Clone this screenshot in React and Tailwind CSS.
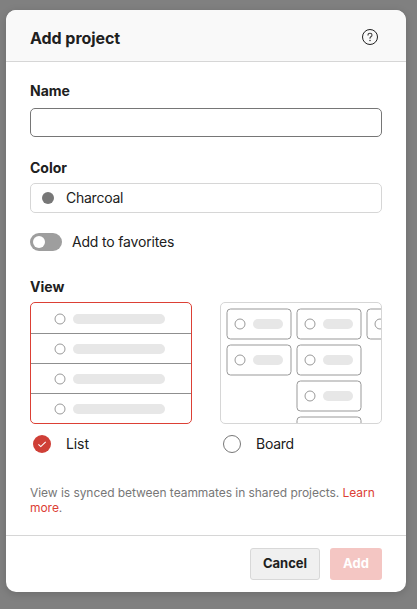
const LIST_ROWS = [
  "h-[31px] border-b pt-[2px]",
  "h-[30px] border-b pt-px",
  "h-[30px] border-b pt-px",
  "h-[29px] pt-px",
];

function ListPreview() {
  return (
    <div className="h-[122px] w-[162px] overflow-hidden rounded-[5px] border border-[#dc4035] bg-white">
      {LIST_ROWS.map((row, i) => (
        <div key={i} className={"flex items-center border-[#8f8f8f] pl-[23px] " + row}>
          <svg width="12" height="12" viewBox="0 0 12 12" className="shrink-0">
            <circle cx="6" cy="6" r="5" fill="none" stroke="#999" />
          </svg>
          <span className="ml-[7px] h-[10px] w-[92px] rounded-full bg-[#e7e7e7]" />
        </div>
      ))}
    </div>
  );
}

function MiniCard({ x, y }) {
  return (
    <g transform={`translate(${x} ${y})`} fill="none">
      <rect x="1" y="1" width="64" height="30" rx="3.5" stroke="#999" />
      <circle cx="14" cy="16" r="5" stroke="#999" />
      <rect x="27" y="11" width="30" height="10" rx="5" fill="#e7e7e7" />
    </g>
  );
}

function BoardPreview() {
  return (
    <div className="h-[122px] w-[162px] overflow-hidden rounded-[5px] border border-[#d6d6d6] bg-white">
      <svg width="160" height="120" viewBox="0 0 160 120" className="block">
        <MiniCard x={5} y={5} />
        <MiniCard x={75} y={5} />
        <MiniCard x={145} y={5} />
        <MiniCard x={5} y={41} />
        <MiniCard x={75} y={41} />
        <MiniCard x={75} y={77} />
        <MiniCard x={75} y={113} />
      </svg>
    </div>
  );
}

export default function App() {
  return (
    <div className="h-[609px] w-[417px] overflow-hidden bg-[#808080] pl-1.5 pt-2.5 font-['Inter',sans-serif] text-sm text-[#202020]">
      <div className="flex h-[582px] w-[400px] flex-col overflow-hidden rounded-[10px] bg-white shadow-[0_2px_8px_rgba(0,0,0,0.16)]">
        <header className="flex h-[52px] shrink-0 items-center justify-between border-b border-[#d6d6d6] bg-[#f9f9f9] pl-6 pr-7 pt-[3px]">
          <h1 className="pt-0.5 text-base font-bold tracking-[-0.05px]">Add project</h1>
          <svg width="16" height="16" viewBox="0 0 16 16" fill="none">
            <circle cx="8" cy="8" r="7.5" stroke="#202020" />
            <path d="M6 6.1C6 4.9 6.8 4.2 8 4.2s2 .7 2 1.8c0 .9-.5 1.3-1.1 1.7-.6.4-.9.7-.9 1.5" stroke="#404040" strokeWidth="1.1" strokeLinecap="round" />
            <circle cx="8" cy="11.5" r=".75" fill="#303030" />
          </svg>
        </header>

        <main className="flex flex-1 flex-col px-6 pt-5">
          <label className="text-sm leading-[18px] font-bold" htmlFor="name">Name</label>
          <input id="name" className="mt-2 h-[29px] w-full rounded-[5px] border border-[#767676] bg-white px-2 outline-none" />

          <div className="mt-[22px] leading-[18px] font-bold">Color</div>
          <button className="mt-1.5 flex h-[30px] w-full items-center rounded-[5px] border border-[#d6d6d6] pl-[11px]">
            <span className="size-3 rounded-full bg-[#777]" />
            <span className="ml-3 tracking-[-0.25px]">Charcoal</span>
          </button>

          <div className="mt-5 flex h-[18px] items-center">
            <span className="flex h-[18px] w-8 items-center rounded-full bg-[#9e9e9e] pl-[3px]">
              <span className="size-3 rounded-full bg-white" />
            </span>
            <span className="ml-2.5 tracking-[-0.18px]">Add to favorites</span>
          </div>

          <div className="mt-[27px] leading-[18px] font-bold">View</div>
          <div className="mt-1.5 flex gap-7">
            <div>
              <ListPreview />
              <div className="mt-[11px] flex h-[18px] items-center pl-[3px]">
                <svg width="18" height="18" viewBox="0 0 18 18" fill="none">
                  <circle cx="9" cy="9" r="9" fill="#cf3f37" />
                  <path d="M5.4 9.3 7.8 11.6 12.7 6.9" stroke="#fff" strokeWidth="1.1" />
                </svg>
                <span className="ml-[15px] tracking-[-0.1px]">List</span>
              </div>
            </div>
            <div>
              <BoardPreview />
              <div className="mt-[11px] flex h-[18px] items-center pl-[3px]">
                <span className="size-[18px] rounded-full border border-[#777]" />
                <span className="ml-[15px] tracking-[-0.25px]">Board</span>
              </div>
            </div>
          </div>

          <p className="mt-8 text-xs leading-[15px] tracking-[-0.05px] text-[#777]">
            View is synced between teammates in shared projects. <a className="text-[#dc4035]">Learn<br />more</a>.
          </p>
        </main>

        <footer className="flex h-[57px] shrink-0 justify-end gap-2.5 border-t border-[#d6d6d6] pr-6 pt-3 text-[13px] font-bold">
          <button className="h-8 w-[70px] rounded-[3px] border border-[#d8d8d8] bg-[#f0f0f0] pb-0.5">Cancel</button>
          <button className="h-8 w-[52px] rounded-[3px] bg-[#f4c6c3] pb-0.5 text-white">Add</button>
        </footer>
      </div>
    </div>
  );
}
